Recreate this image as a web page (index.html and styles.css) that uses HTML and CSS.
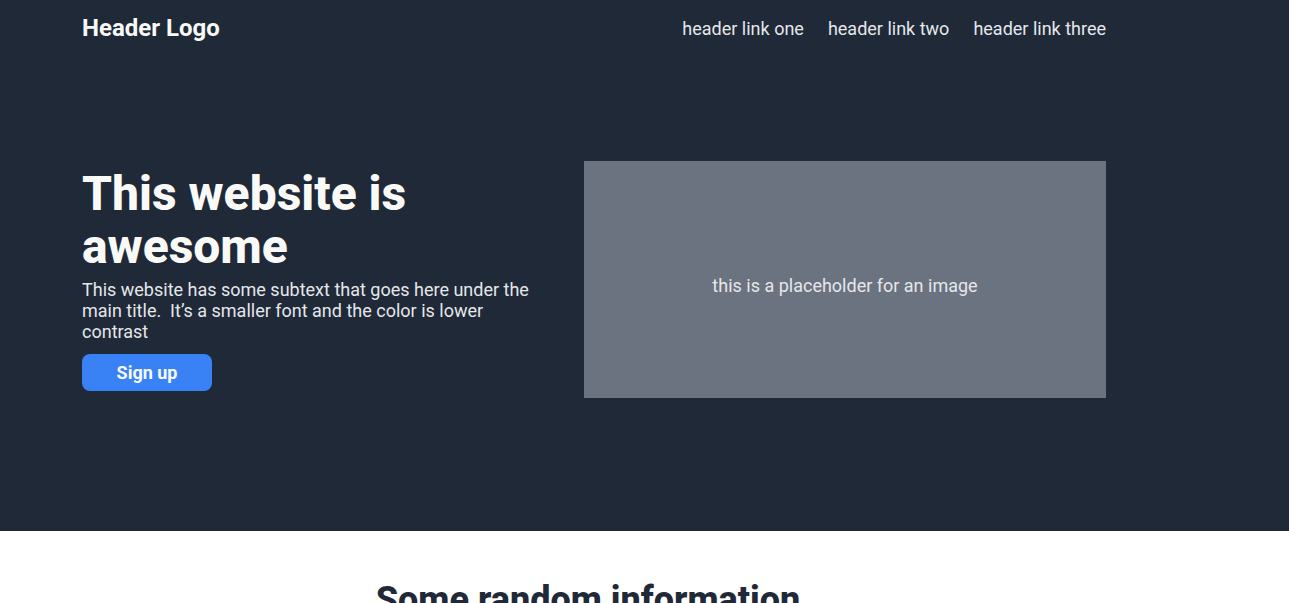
FILE: index.html
```html
<!DOCTYPE html>
<html lang="en">
<head>
<meta charset="utf-8">
<title>Landing page</title>
<link rel="stylesheet" href="styles.css">
</head>
<body>
<div class="dark">
  <header class="header">
    <div class="logo">Header Logo</div>
    <nav class="links">
      <a href="#">header link one</a>
      <a href="#">header link two</a>
      <a href="#">header link three</a>
    </nav>
  </header>
  <section class="hero">
    <div class="hero-text">
      <h1 class="hero-title">This website is awesome</h1>
      <p class="hero-sub">This website has some subtext that goes here under the main title.&nbsp; It’s a smaller font and the color is lower contrast</p>
      <button class="btn">Sign up</button>
    </div>
    <div class="placeholder">this is a placeholder for an image</div>
  </section>
</div>
<section class="info">
  <h2 class="info-title">Some random information</h2>
</section>
</body>
</html>
```
FILE: styles.css
```css
* { box-sizing: border-box; }
body {
  margin: 0;
  font-family: Roboto, "Liberation Sans", sans-serif;
  background: #ffffff;
}
.dark {
  background: #1f2937;
  padding: 0 0 133px 82px;
}
.header {
  width: 1024px;
  display: flex;
  justify-content: space-between;
  align-items: baseline;
  padding: 14px 0;
}
.logo {
  font-size: 24px;
  font-weight: 700;
  color: #f9faf8;
}
.links {
  display: flex;
  gap: 24px;
  position: relative;
  top: -1px;
}
.links a {
  font-size: 18px;
  color: #e5e7eb;
  text-decoration: none;
}
.hero {
  width: 1024px;
  margin-top: 105px;
  display: flex;
  justify-content: space-between;
  align-items: center;
}
.hero-text {
  width: 470px;
}
.hero-title {
  margin: 0;
  font-size: 48px;
  line-height: 1.1;
  font-weight: 800;
  color: #f9faf8;
}
.hero-sub {
  margin: 5px 0 12px;
  font-size: 18px;
  color: #e5e7eb;
}
.btn {
  display: block;
  width: 130px;
  height: 37px;
  border: none;
  border-radius: 8px;
  background: #3882f6;
  color: #f9faf8;
  font-family: inherit;
  font-size: 18px;
  font-weight: 700;
}
.placeholder {
  width: 522px;
  height: 237px;
  padding-top: 12px;
  background: #6b7280;
  color: #e5e7eb;
  font-size: 18px;
  display: flex;
  align-items: center;
  justify-content: center;
}
.info {
  width: 1012px;
  margin-left: 82px;
  padding-top: 48px;
  text-align: center;
}
.info-title {
  margin: 0;
  font-size: 36px;
  font-weight: 800;
  color: #1f2937;
}
```
